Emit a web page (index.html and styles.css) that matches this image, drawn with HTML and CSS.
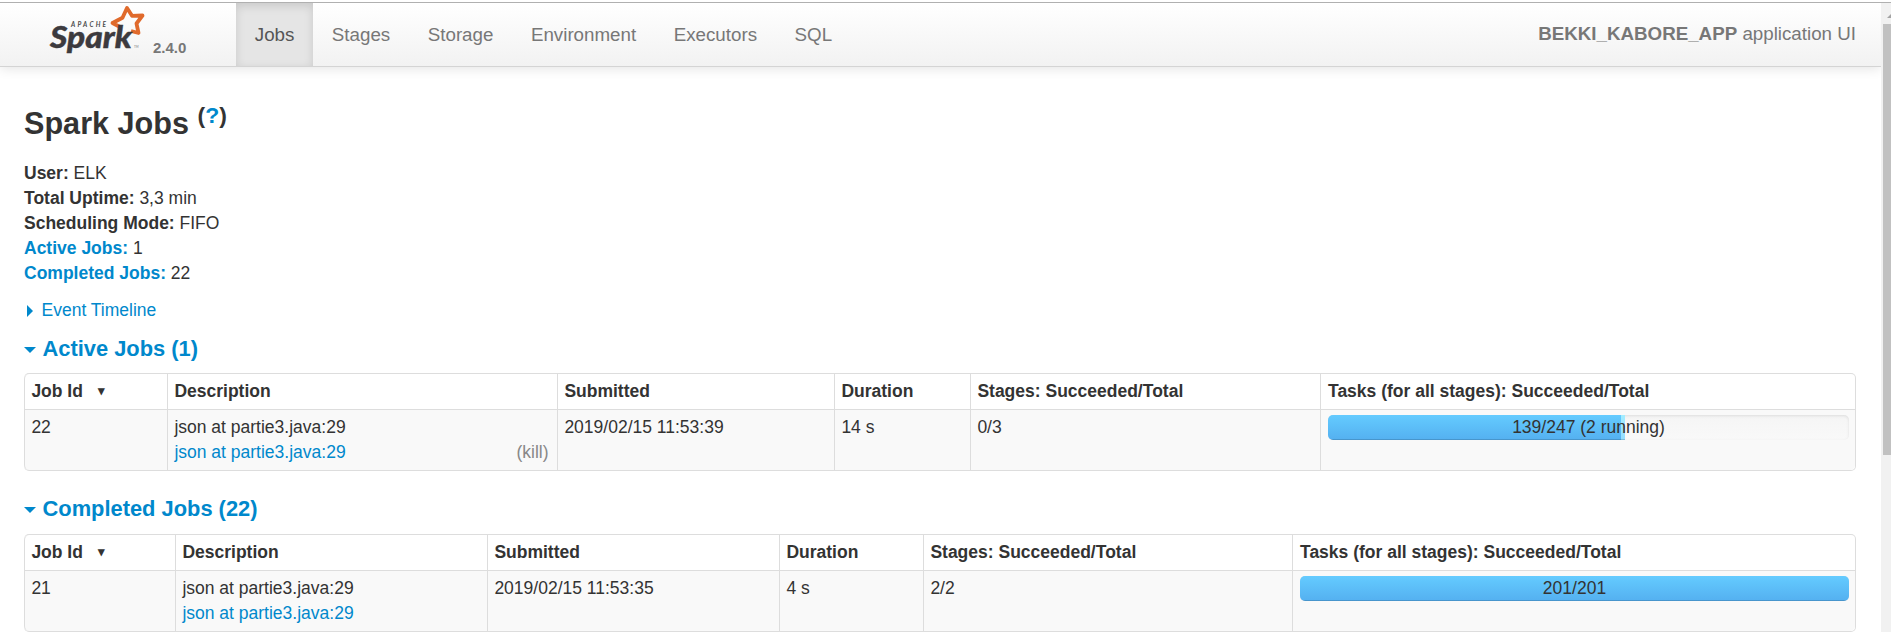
FILE: index.html
```html
<!DOCTYPE html>
<html lang="en">
<head>
<meta charset="utf-8">
<title>Spark Jobs</title>
<link rel="stylesheet" href="styles.css">
</head>
<body>
<div class="window">
  <div class="page">
    <nav class="navbar">
      <a class="brand">
        <svg class="logo" width="96" height="52" viewBox="0 0 96 52">
          <path class="star" d="M72 24.500 L63.500 20 L73.500 14.800 L78 5 L83 12.800 L93.500 12.500 L87.500 20.500 L89.500 30 L82 28"/>
          <text class="apache" x="22" y="23.500" textLength="35">APACHE</text>
          <text class="word" x="1" y="45" textLength="82" lengthAdjust="spacingAndGlyphs">Spark</text>
          <text class="tm" x="85" y="45">TM</text>
        </svg>
        <span class="version">2.4.0</span>
      </a>
      <ul class="nav">
        <li class="active">Jobs</li><li>Stages</li><li>Storage</li><li>Environment</li><li>Executors</li><li>SQL</li>
      </ul>
      <p class="app"><strong>BEKKI_KABORE_APP</strong> application UI</p>
    </nav>
    <main class="content">
      <h3>Spark Jobs <sup>(<a>?</a>)</sup></h3>
      <ul class="summary">
        <li><strong>User:</strong> ELK</li>
        <li><strong>Total Uptime:</strong> 3,3 min</li>
        <li><strong>Scheduling Mode:</strong> FIFO</li>
        <li><a><strong>Active Jobs:</strong></a> 1</li>
        <li><a><strong>Completed Jobs:</strong></a> 22</li>
      </ul>
      <div class="timeline"><span class="arrow closed"></span><a>Event Timeline</a></div>
      <h4><span class="arrow open"></span><a>Active Jobs (1)</a></h4>
      <table class="jobs active-jobs">
        <colgroup><col class="c1"><col class="c2"><col class="c3"><col class="c4"><col class="c5"><col class="c6"></colgroup>
        <thead><tr><th>Job Id <span class="sort">▾</span></th><th>Description</th><th>Submitted</th><th>Duration</th><th>Stages: Succeeded/Total</th><th>Tasks (for all stages): Succeeded/Total</th></tr></thead>
        <tbody><tr>
          <td>22</td>
          <td>json at partie3.java:29<div class="line"><a>json at partie3.java:29</a><span class="kill">(kill)</span></div></td>
          <td>2019/02/15 11:53:39</td><td>14 s</td><td>0/3</td>
          <td><div class="progress"><span class="label">139/247 (2 running)</span><div class="bar done" style="width:56.28%"></div><div class="bar running" style="width:.81%"></div></div></td>
        </tr></tbody>
      </table>
      <h4 class="second"><span class="arrow open"></span><a>Completed Jobs (22)</a></h4>
      <table class="jobs completed-jobs">
        <colgroup><col class="c1"><col class="c2"><col class="c3"><col class="c4"><col class="c5"><col class="c6"></colgroup>
        <thead><tr><th>Job Id <span class="sort">▾</span></th><th>Description</th><th>Submitted</th><th>Duration</th><th>Stages: Succeeded/Total</th><th>Tasks (for all stages): Succeeded/Total</th></tr></thead>
        <tbody><tr>
          <td>21</td>
          <td>json at partie3.java:29<div class="line"><a>json at partie3.java:29</a></div></td>
          <td>2019/02/15 11:53:35</td><td>4 s</td><td>2/2</td>
          <td><div class="progress"><span class="label">201/201</span><div class="bar done" style="width:100%"></div></div></td>
        </tr></tbody>
      </table>
    </main>
  </div>
  <div class="scrollbar"><span class="up"></span><div class="thumb"></div></div>
</div>
</body>
</html>
```
FILE: styles.css
```css
* { box-sizing: border-box; }
html, body { margin: 0; height: 632px; overflow: hidden; background: #fff; }
body {
  font: 17.5px/25px "Liberation Sans", Arial, sans-serif;
  color: #333;
  padding-top: 2px;
}
ul { list-style: none; margin: 0; padding: 0; }
a { color: #0088cc; text-decoration: none; }
.window { display: flex; height: 630px; border-top: 1px solid #b0b0b0; }
.page { width: 1881px; overflow: hidden; }

.navbar {
  display: flex;
  height: 64px;
  padding: 0 25px 0 49px;
  background: linear-gradient(#fff, #f2f2f2);
  border-bottom: 1px solid #d4d4d4;
  box-shadow: 0 1px 12px rgba(0, 0, 0, .12);
  font-size: 18.75px;
  color: #777;
}
.brand { display: flex; width: 187px; color: #777; }
.logo { flex: none; overflow: visible; }
.star { fill: none; stroke: #e06a2c; stroke-width: 3.8; stroke-linejoin: round; }
.apache { font: italic bold 6.5px Lato, sans-serif; fill: #4a4a4a; }
.word { font: italic 900 30px Lato, sans-serif; fill: #3c3a3e; stroke: #3c3a3e; stroke-width: .4; }
.tm { font: 3px Lato, sans-serif; fill: #777; }
.version { font-size: 15px; font-weight: bold; padding: 31.5px 0 0 8px; }
.nav { display: flex; }
.nav li { padding: 19px 18.75px 0; }
.nav .active { color: #555; background: #e5e5e5; box-shadow: inset 0 3px 10px rgba(0, 0, 0, .125); }
.app { margin: 0 0 0 auto; padding-top: 18px; }

.content { padding: 31px 25px 0 24px; }
h3 { margin: 0; font-size: 30.625px; line-height: 50px; height: 63px; }
h3 sup { font-size: 22.97px; line-height: 0; position: relative; top: -.5em; vertical-align: baseline; }
.summary { height: 125px; }
.timeline { margin-top: 12px; display: flex; align-items: center; }
.arrow { flex: none; }
.closed { margin: 0 8.5px 0 3px; border: 6px solid transparent; border-left: 6px solid #08c; border-right: 0; }
.open { margin: 3px 6.5px 0 0; border: 6px solid transparent; border-top: 6px solid #08c; border-bottom: 0; }
h4 { display: flex; align-items: center; margin: 13px 0 12px; font-size: 21.875px; line-height: 25px; }
h4.second { margin: 25px 0 13px; }

.jobs {
  width: 1832px;
  table-layout: fixed;
  border: 1px solid #ddd;
  border-left: 0;
  border-collapse: separate;
  border-spacing: 0;
  border-radius: 5px;
}
.jobs th, .jobs td {
  border-left: 1px solid #ddd;
  padding: 5px 6px 5px 6.4px;
  text-align: left;
  vertical-align: top;
}
.jobs th { height: 35px; }
.jobs td { height: 61px; border-top: 1px solid #ddd; background: #f9f9f9; }
.jobs th:first-child { border-top-left-radius: 5px; }
.jobs td:first-child { border-bottom-left-radius: 5px; }
.jobs td:last-child { border-bottom-right-radius: 5px; }
.jobs th:last-child, .jobs td:last-child { padding-left: 7px; }
.active-jobs .c1 { width: 143px; }
.active-jobs .c2 { width: 390px; }
.active-jobs .c3 { width: 277px; }
.active-jobs .c4 { width: 136px; }
.active-jobs .c5 { width: 350px; }
.completed-jobs .c1 { width: 151px; }
.completed-jobs .c2 { width: 312px; }
.completed-jobs .c3 { width: 292px; }
.completed-jobs .c4 { width: 144px; }
.completed-jobs .c5 { width: 369px; }
.sort { margin-left: 10px; font-size: 13px; line-height: 0; vertical-align: 2px; }
.line { display: flex; justify-content: space-between; }
.kill { color: #888; padding-right: 2.5px; }

.progress {
  position: relative;
  display: flex;
  height: 25px;
  overflow: hidden;
  border-radius: 5px;
  background: linear-gradient(#f5f5f5, #f9f9f9);
  box-shadow: inset 0 1px 3px rgba(0, 0, 0, .1);
}
.label { position: absolute; inset: 0; text-align: center; z-index: 1; }
.done { background: linear-gradient(#64cbff, #54b0f0); box-shadow: inset 0 -1px 0 rgba(0, 0, 0, .15); }
.running { background: linear-gradient(#a4edff, #94ddff); box-shadow: inset 0 -1px 0 rgba(0, 0, 0, .15); }

.scrollbar { width: 10px; background: #f1f1f1; overflow: hidden; }
.up { display: block; margin: 10px 0 6px 6px; width: 0; border: 5px solid transparent; border-bottom-color: #a3a3a3; border-top: 0; height: 5px; }
.thumb { height: 431px; margin-left: 2px; background: #c1c1c1; }
```
